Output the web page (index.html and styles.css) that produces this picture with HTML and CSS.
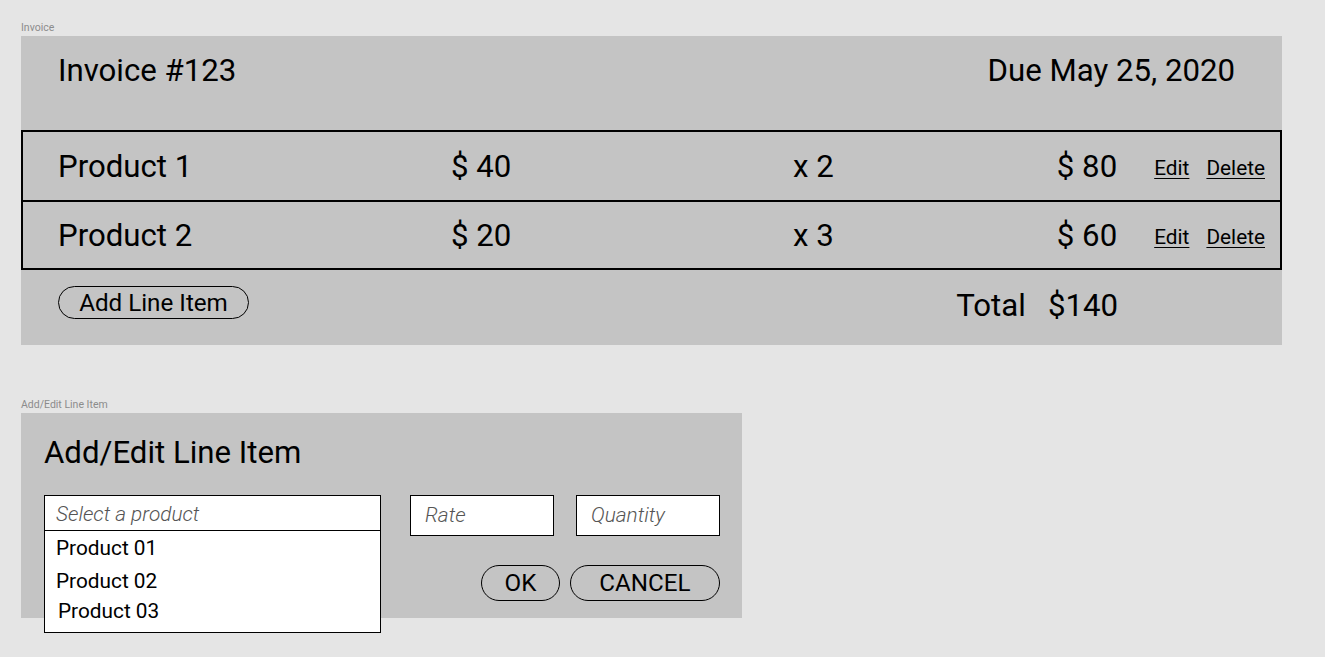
FILE: index.html
```html
<!DOCTYPE html>
<html lang="en">
<head>
<meta charset="utf-8">
<title>Invoice</title>
<link rel="stylesheet" href="styles.css">
</head>
<body>
<main class="canvas">
  <section class="board">
    <div class="board-label">Invoice</div>
    <div class="frame invoice">
      <header class="invoice-head">
        <h1 class="big">Invoice #123</h1>
        <div class="big">Due May 25, 2020</div>
      </header>
      <div class="rows">
        <div class="row">
          <div class="col-product big">Product 1</div>
          <div class="col-rate big">$ 40</div>
          <div class="col-qty big">x 2</div>
          <div class="col-amount big">$ 80</div>
          <div class="actions"><a class="link">Edit</a><a class="link">Delete</a></div>
        </div>
        <div class="row">
          <div class="col-product big">Product 2</div>
          <div class="col-rate big">$ 20</div>
          <div class="col-qty big">x 3</div>
          <div class="col-amount big">$ 60</div>
          <div class="actions"><a class="link">Edit</a><a class="link">Delete</a></div>
        </div>
      </div>
      <footer class="invoice-foot">
        <button class="pill pill-add">Add Line Item</button>
        <div class="total big"><span>Total</span><span>$140</span></div>
      </footer>
    </div>
  </section>

  <section class="board board-editor">
    <div class="board-label">Add/Edit Line Item</div>
    <div class="frame editor">
      <h2 class="big editor-title">Add/Edit Line Item</h2>
      <div class="fields">
        <div class="select">
          <div class="field field-select">Select a product</div>
          <ul class="dropdown">
            <li>Product 01</li>
            <li>Product 02</li>
            <li class="nudge">Product 03</li>
          </ul>
        </div>
        <div class="field field-small">Rate</div>
        <div class="field field-small">Quantity</div>
      </div>
      <div class="buttons">
        <button class="pill pill-ok">OK</button>
        <button class="pill pill-cancel">CANCEL</button>
      </div>
    </div>
  </section>
</main>
</body>
</html>
```
FILE: styles.css
```css
* { box-sizing: border-box; }

html, body {
  margin: 0;
  padding: 0;
  background: #e5e5e5;
  font-family: Roboto, "Liberation Sans", sans-serif;
  color: #000;
}

.canvas {
  padding: 22px 0 0 21px;
  width: 1325px;
  height: 657px;
}

.board-label {
  font-size: 10.5px;
  line-height: 12px;
  height: 12px;
  margin-bottom: 2px;
  color: #8c8c8c;
}

.board-editor {
  margin-top: 54px;
}

.frame {
  background: #c4c4c4;
}

.big {
  font-size: 31.2px;
  line-height: 36px;
  font-weight: 400;
  margin: 0;
}

/* Invoice */
.invoice {
  width: 1261px;
  height: 309px;
  display: flex;
  flex-direction: column;
}

.invoice-head {
  height: 94px;
  display: flex;
  justify-content: space-between;
  align-items: flex-start;
  padding: 17px 47px 0 37px;
}

.rows {
  border: 2px solid #000;
}

.row {
  height: 68px;
  display: flex;
  align-items: center;
  padding: 1px 15px 0 35px;
}

.row + .row {
  border-top: 2px solid #000;
}

.col-product { width: 393px; }
.col-rate { width: 342px; }
.col-qty { flex: 1; }
.col-amount { text-align: right; }

.actions {
  display: flex;
  gap: 17px;
  margin-left: 37px;
  padding-top: 3px;
}

.link {
  font-size: 20.8px;
  line-height: 24px;
  text-decoration: underline;
  text-underline-offset: 3px;
  text-decoration-thickness: 1px;
  cursor: pointer;
}

.invoice-foot {
  flex: 1;
  display: flex;
  justify-content: space-between;
  align-items: flex-start;
  padding: 16px 164px 0 37px;
}

.total {
  display: flex;
  gap: 22px;
  margin-top: 2px;
}

/* Pills */
.pill {
  font-family: inherit;
  font-size: 24.2px;
  line-height: 28px;
  color: #000;
  background: transparent;
  border: 1.5px solid #000;
  border-radius: 20px;
  padding: 0;
  display: flex;
  align-items: center;
  justify-content: center;
}

.pill-add {
  width: 191px;
  height: 33px;
}

.pill-ok { width: 79px; height: 36px; }
.pill-cancel { width: 150px; height: 36px; }

/* Editor */
.editor {
  width: 721px;
  height: 205px;
  padding: 22px 22px 0 23px;
}

.editor-title {
  height: 36px;
}

.fields {
  display: flex;
  align-items: flex-start;
  margin-top: 24px;
}

.select {
  position: relative;
  width: 337px;
}

.field {
  background: #fff;
  border: 1.5px solid #000;
  font-size: 20.8px;
  font-style: italic;
  font-weight: 300;
  color: #555;
  display: flex;
  align-items: center;
}

.field-select {
  height: 36px;
  padding-left: 11px;
  padding-top: 2px;
}

.field-small {
  width: 144px;
  height: 41px;
  padding-left: 14px;
  padding-bottom: 1px;
  margin-left: 29px;
}

.field-small + .field-small {
  margin-left: 22px;
}

.dropdown {
  position: absolute;
  top: 100%;
  left: 0;
  width: 100%;
  height: 102px;
  margin: 0;
  padding: 5px 0 0 11px;
  list-style: none;
  background: #fff;
  border: 1.5px solid #000;
  border-top: 0;
  font-size: 20.8px;
  color: #000;
}

.dropdown li {
  line-height: 24px;
  height: 33px;
}

.dropdown li.nudge {
  padding-left: 2px;
  margin-top: -3px;
}

.buttons {
  display: flex;
  justify-content: flex-end;
  gap: 10px;
  margin-top: 29px;
}
```
